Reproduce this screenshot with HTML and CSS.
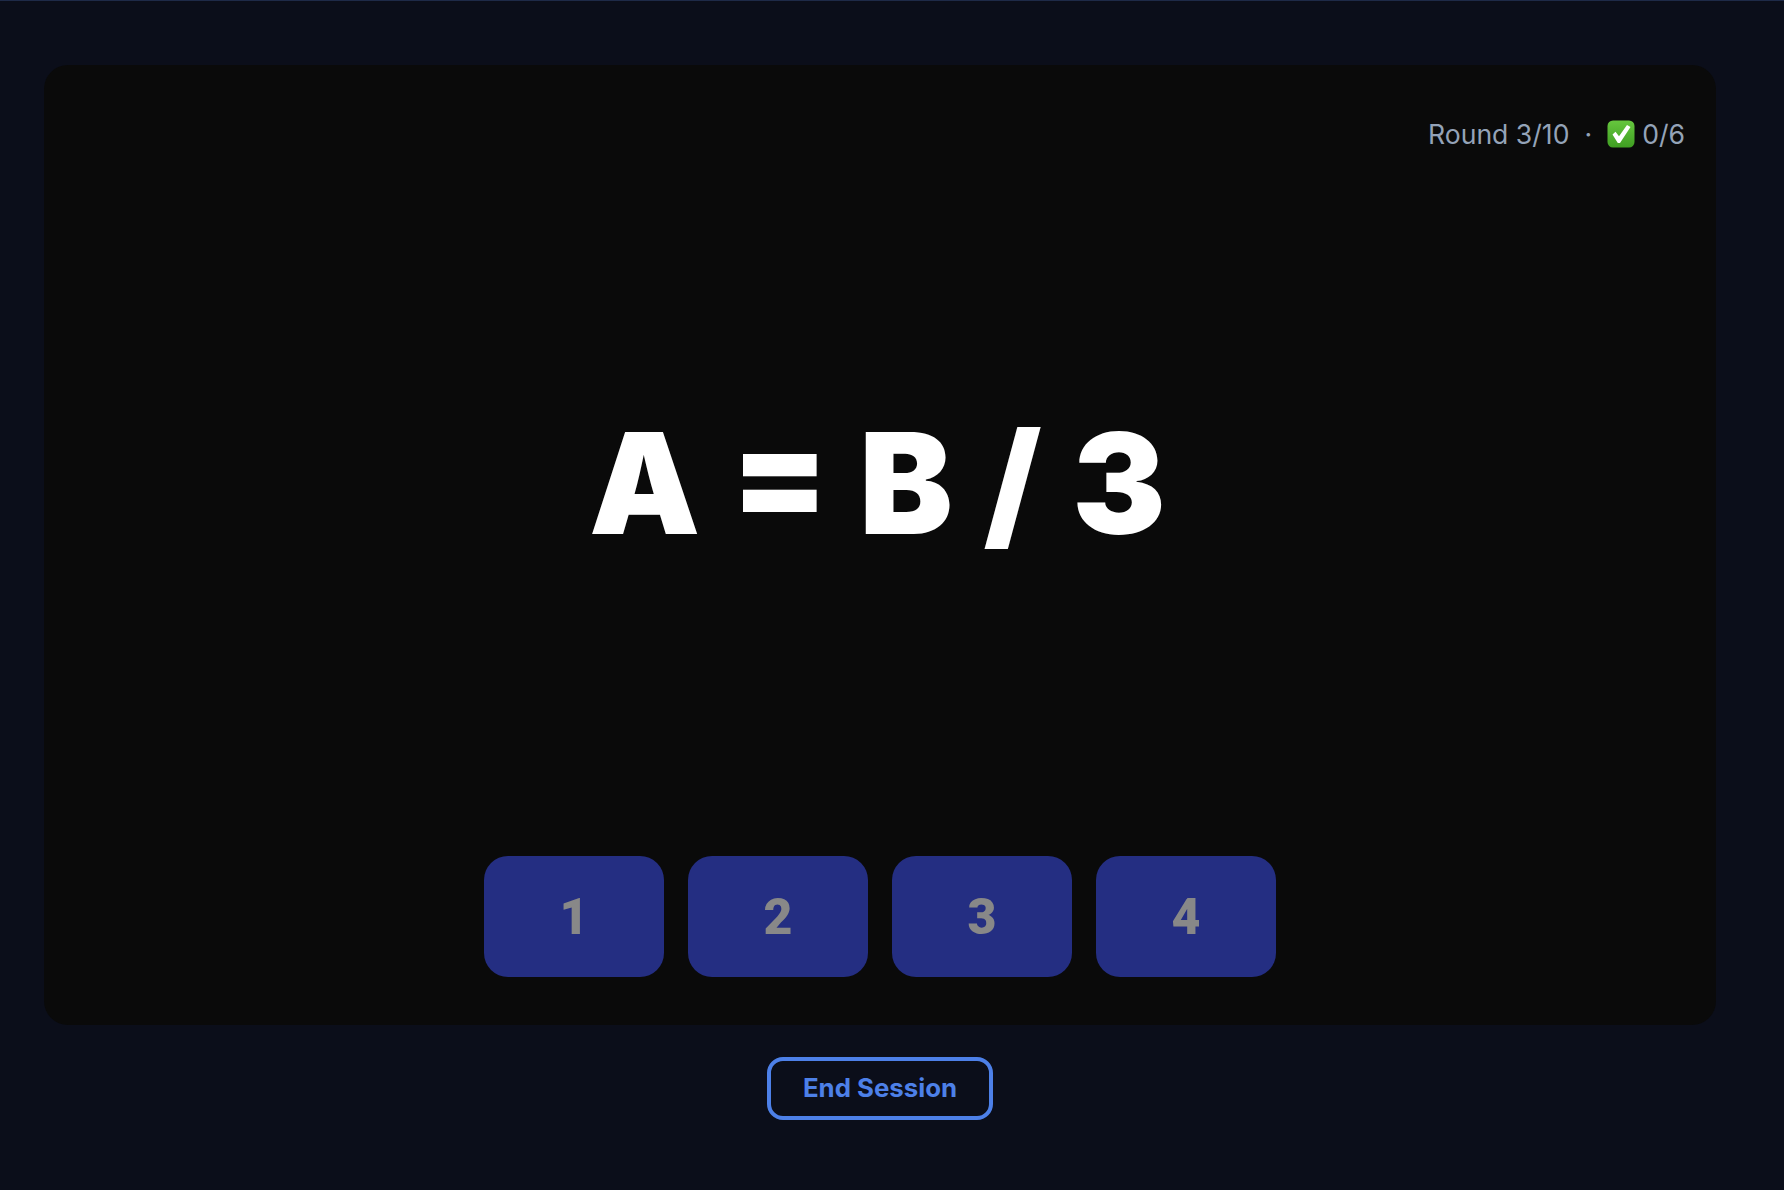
FILE: index.html
```html
<!DOCTYPE html>
<html>
<head>
    <meta charset="UTF-8">
    <title>Math Game</title>
    <link rel="stylesheet" href="styles.css">
</head>
<body>
    <div class="game-card">
        <div class="score-line">
            <span>Round 3/10</span>
            <span class="dot">·</span>
            <svg class="check-icon" viewBox="0 0 28 28">
                <defs>
                    <linearGradient id="checkGreen" x1="0" y1="0" x2="0" y2="1">
                        <stop offset="0" stop-color="#66c63e"/>
                        <stop offset="1" stop-color="#3f9e22"/>
                    </linearGradient>
                </defs>
                <rect x="0.5" y="0.5" width="27" height="27" rx="5.5" fill="url(#checkGreen)"/>
                <path d="M5.5 14.5 L8.5 11.8 L12 16.2 L20 5 L23.5 7 L13 23 L10.8 23 Z" fill="#fff"/>
            </svg>
            <span>0/6</span>
        </div>
        <div class="equation">A = B / 3</div>
        <div class="answers">
            <button class="answer">1</button>
            <button class="answer">2</button>
            <button class="answer">3</button>
            <button class="answer">4</button>
        </div>
    </div>
    <button class="end-session">End Session</button>
</body>
</html>
```

FILE: styles.css
```css
body {
    display: flex;
    flex-direction: column;
    align-items: center;
    height: 1190px;
    box-sizing: border-box;
    margin: 0;
    padding: 64px 68px 0 44px;
    border-top: 1px solid #1e2a48;
    background-color: #0b0e1a;
    font-family: Inter, "Liberation Sans", sans-serif;
    overflow: hidden;
}
.game-card {
    display: flex;
    flex-direction: column;
    align-items: center;
    width: 100%;
    height: 960px;
    box-sizing: border-box;
    padding: 49px 31px 48px;
    background-color: #0a0a0a;
    border-radius: 24px;
}
.score-line {
    display: flex;
    align-items: center;
    align-self: flex-end;
    height: 40px;
    font-size: 26.6px;
    color: #94a3b8;
}
.dot {
    margin: 0 15px;
}
.check-icon {
    width: 28px;
    height: 28px;
    margin-right: 7px;
}
.equation {
    flex: 1;
    display: flex;
    align-items: center;
    justify-content: center;
    padding: 0 5px 45px 0;
    font-size: 140px;
    font-weight: 900;
    word-spacing: 3px;
    color: white;
}
.answers {
    display: flex;
    gap: 24px;
}
.answer {
    width: 180px;
    height: 121px;
    background-color: #242e82;
    border: none;
    border-radius: 24px;
    font-family: Roboto, "Liberation Sans", sans-serif;
    font-size: 50px;
    font-weight: 900;
    color: #888888;
}
.end-session {
    width: 226px;
    height: 63px;
    margin-top: 32px;
    padding-bottom: 3px;
    background: none;
    border: 4px solid #4d80e8;
    border-radius: 16px;
    font-family: Inter, "Liberation Sans", sans-serif;
    font-size: 25.8px;
    font-weight: 700;
    color: #4d80e8;
}
```
